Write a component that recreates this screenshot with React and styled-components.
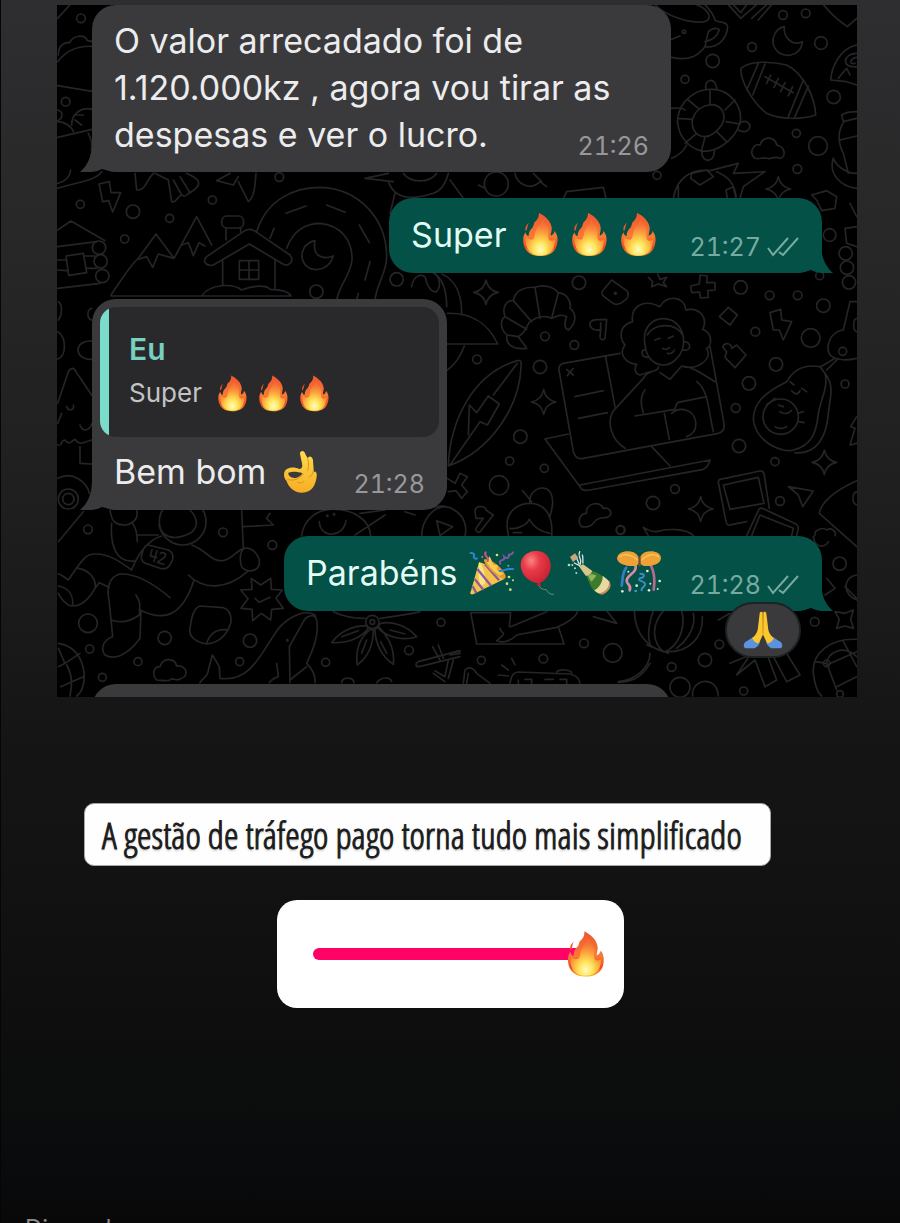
import React, { useState } from "react";
import styled, { createGlobalStyle, css } from "styled-components";

const GlobalStyle = createGlobalStyle`
	* {
		box-sizing: border-box;
	}
	body {
		margin: 0;
		background: #090909;
		font-family: Inter, "Liberation Sans", sans-serif;
	}
`;

const colors = {
	received: "#3a3a3c",
	sent: "#035147",
	quote: "#29292b",
	accent: "#7bdccc",
	pink: "#ff0464",
};

const Story = styled.main`
	display: flex;
	flex-direction: column;
	height: 100vh;
	overflow: hidden;
	padding-top: 5px;
	border-left: 1px solid #050505;
	background: linear-gradient(#2e2e30 0%, #272728 20%, #1e1e1f 42%, #151515 60%, #111111 75%, #090a0b 97%, #080808 100%);
`;

const Chat = styled.section`
	position: relative;
	display: flex;
	flex-direction: column;
	flex-shrink: 0;
	gap: 26px;
	margin: 0 43px 0 56px;
	padding: 0 35px;
	overflow: hidden;
	background: #000;
`;

const Wallpaper = styled.svg`
	position: absolute;
	top: 0;
	left: 0;
	width: 100%;
	height: 100%;
	fill: none;
	stroke: #252527;
	stroke-width: 5;
	stroke-linecap: round;
	stroke-linejoin: round;
`;

const Bubble = styled.article`
	position: relative;
	display: flex;
	flex-direction: column;
	max-width: 579px;
	border-radius: 24px;
	align-self: ${props => (props.$sent ? "flex-end" : "flex-start")};
	background: ${props => (props.$sent ? colors.sent : colors.received)};
	color: ${props => (props.$sent ? "#e2fbf5" : "#ececee")};
	padding: ${props => (props.$quoted ? "8px 8px 14px" : "12px 22px 14px")};
`;

const TailShape = styled.svg`
	position: absolute;
	bottom: 0;
	width: 34px;
	height: 30px;
	fill: ${props => (props.$sent ? colors.sent : colors.received)};
	${props =>
		props.$sent
			? css`
					right: -11px;
					transform: scaleX(-1);
			  `
			: css`
					left: -12px;
			  `}
`;

const Text = styled.p`
	position: relative;
	margin: 0;
	font-size: 34px;
	line-height: 47px;
`;

const Line = styled.div`
	position: relative;
	display: flex;
	align-items: center;
	min-height: 49px;
	padding: ${props => (props.$inset ? "0 14px" : "0")};
`;

const Emojis = styled.span`
	display: flex;
	gap: 4px;
	margin: 0 28px 0 12px;
`;

const Emoji = styled.svg`
	display: block;
	flex-shrink: 0;
	width: ${props => props.$size || 45}px;
	height: ${props => props.$size || 45}px;
`;

const Meta = styled.span`
	display: flex;
	align-items: center;
	gap: 6px;
	font-size: 25px;
	font-variant-numeric: tabular-nums;
	line-height: 30px;
	color: ${props => (props.$sent ? "#78aba0" : "#98989c")};
	${props =>
		props.$float
			? css`
					float: right;
					margin: 20px 0 -3px;
			  `
			: css`
					align-self: flex-end;
					margin: 0 0 -3px auto;
			  `}
`;

const Ticks = styled.svg`
	width: 33px;
	height: 22px;
	fill: none;
	stroke: currentColor;
	stroke-width: 2;
`;

const Quote = styled.blockquote`
	display: flex;
	flex-direction: column;
	min-width: 339px;
	height: 130px;
	margin: 0 0 10px;
	padding: 23px 20px 23px 29px;
	border-radius: 16px;
	background: linear-gradient(to right, ${colors.accent} 9px, ${colors.quote} 9px);
`;

const Author = styled.cite`
	font-size: 30px;
	font-weight: 600;
	font-style: normal;
	line-height: 38px;
	color: #78d0c0;
`;

const Quoted = styled.div`
	display: flex;
	align-items: center;
	font-size: 26px;
	line-height: 50px;
	color: #c3c3c6;
`;

const Reaction = styled.span`
	position: absolute;
	right: 21px;
	bottom: -47px;
	display: grid;
	place-items: center;
	width: 76px;
	height: 56px;
	border: 2px solid #1c2423;
	border-radius: 28px;
	background: ${colors.received};
`;

const NextBubble = styled.div`
	position: relative;
	width: 579px;
	max-width: 100%;
	height: 60px;
	margin: 47px 0 -47px;
	border-radius: 24px;
	background: ${colors.received};
`;

const Caption = styled.p`
	align-self: flex-start;
	flex-shrink: 0;
	margin: 106px 20px 0 83px;
	padding: 7px 28px 7px 17px;
	border: 1px solid #a5a5a5;
	border-radius: 10px;
	background: #fefefe;
	color: #1b1b1b;
	font-family: "Open Sans Condensed Light", "Open Sans Condensed", sans-serif;
	font-size: 37px;
	line-height: 47px;
	white-space: nowrap;
	-webkit-text-stroke: 1px #1b1b1b;
	text-shadow: 0 2px 2px rgba(0, 0, 0, 0.2);
`;

const SliderCard = styled.label`
	align-self: center;
	flex-shrink: 0;
	display: flex;
	align-items: center;
	width: 347px;
	height: 108px;
	margin-top: 34px;
	padding: 0 38px 0 36px;
	border-radius: 20px;
	background: #fff;
`;

const SliderBox = styled.span`
	position: relative;
	display: block;
	flex: 1;
	height: 12px;
`;

const Range = styled.input`
	appearance: none;
	display: block;
	width: 100%;
	height: 12px;
	margin: 0;
	border-radius: 6px;
	background: ${colors.pink};
	cursor: pointer;

	&::-webkit-slider-thumb {
		appearance: none;
		width: 36px;
		height: 46px;
		opacity: 0;
	}
`;

const Thumb = styled.span`
	position: absolute;
	top: 50%;
	transform: translate(-50%, -50%);
	pointer-events: none;
`;

const Discard = styled.button`
	align-self: flex-start;
	flex-shrink: 0;
	margin: 206px 0 0 24px;
	padding: 0;
	border: 0;
	background: none;
	color: #8a8a8d;
	font: 24px/30px Inter, "Liberation Sans", sans-serif;
`;

// [x, y, r] lists and strokes; every patch has its own origin and is drawn at a third of its size
const patches = [
	{
		at: [0, 0],
		dots: [
			[243, 55, 13], [197, 305, 13], [241, 613, 12], [399, 635, 20], [509, 655, 12], [637, 600, 12], [838, 531, 13],
			[374, 717, 12], [949, 875, 20], [1190, 838, 20], [297, 743, 20], [302, 784, 20], [307, 828, 20],
		],
		lines: [
			"M173 55L210 14M175 165C175 140 185 128 210 127C220 105 255 102 262 122C272 122 277 125 280 128M173 185C200 150 235 137 276 139M173 257L276 274",
			"M173 330C190 335 190 355 173 362M215 375C215 340 245 320 276 328M230 345H250M225 360L245 375M173 365C195 365 215 380 220 395M173 412L276 388M265 400C276 420 276 440 274 450",
			"M173 550C195 545 210 530 212 510M173 565C240 545 290 540 305 515M297 552L328 545L333 578L362 578L338 636L326 602L308 605Z",
			"M405 520L410 570C440 570 435 545 460 520M465 520L505 540L515 605C530 610 530 590 545 585C560 595 560 580 570 578C600 560 605 545 580 530L560 520M520 540L545 585M540 530L570 578",
			"M650 542L690 520M650 542L700 555L715 530M715 545L745 605C765 590 765 550 768 520",
			"M770 695C800 600 880 562 960 562C1080 565 1160 660 1160 770C1160 820 1130 850 1125 900M860 745C880 690 920 670 960 670C1020 675 1058 720 1056 780C1050 830 1020 850 1010 900",
			"M858 640L918 618M980 615L1035 637M1078 675L1108 728M1110 785L1095 840M1075 880L1070 900M822 685L810 715",
			"M945 722C915 728 900 755 908 780C920 820 985 820 1000 768C970 780 935 770 945 722Z",
			"M680 648H716C736 648 736 684 716 684H680C660 684 660 648 680 648ZM678 685V720M722 685V695",
			"M620 770L730 695C742 686 755 686 767 695L870 765C885 785 865 800 850 793L748 732L640 795C620 800 605 785 620 770ZM668 780V855M825 780V865M718 782H776V838H718ZM747 782V838M718 810H776",
			"M605 888C630 850 700 850 725 870C760 855 800 855 810 868C850 870 865 875 873 888H333",
			"M333 885C370 830 395 790 415 775L468 702L522 775L590 650L635 735M415 778L440 770L458 802L475 762L522 775M545 735L565 728L580 767L597 728L615 738",
			"M173 690L213 663L315 722M173 740L290 725M173 865L300 850M173 780H200M255 768H285M173 810L200 812M260 805H290M198 768L250 760L260 818L206 826Z",
			"M1165 520L1095 535L1180 545M1165 545C1185 600 1240 600 1300 580C1330 570 1340 540 1345 520M1210 520C1230 550 1290 550 1310 520M1185 580L1170 640",
			"M1235 860C1240 830 1260 820 1275 830C1280 850 1290 880 1310 875C1330 850 1310 820 1300 820",
		],
	},
	{
		at: [450, 0],
		dots: [
			[999, 45, 13], [1067, 40, 13], [1113, 129, 19], [906, 141, 13], [788, 183, 20], [705, 238, 12], [1151, 291, 20],
			[1039, 400, 12], [1104, 438, 28], [1042, 507, 13], [621, 526, 12], [139, 552, 36], [1139, 705, 19], [1187, 760, 20],
			[1191, 803, 20], [1197, 847, 20], [1109, 827, 12], [702, 95, 5],
		],
		stars: [[985, 567]],
		lines: [
			"M1003 80C975 85 960 120 975 145C995 180 1055 170 1057 125C1025 140 1000 110 1003 80Z",
			"M873 205C900 180 970 185 1010 195C1060 220 1095 290 1097 345C1060 358 990 360 950 340C905 305 870 240 873 205ZM925 190L890 270M945 192L908 285M1060 240L1015 350M1075 258L1035 350M945 230L1030 278M962 225L950 250M985 235L972 262M1005 248L992 275M1028 260L1015 287",
			"M683 355C690 300 740 265 790 268C840 270 880 320 870 370C850 430 790 460 750 452C710 440 680 400 683 355ZM727 360C735 330 760 315 790 314C820 320 830 350 815 375C790 410 765 415 745 405C730 395 725 380 727 360Z",
			"M780 314V270M825 330L855 300M828 365L870 372M800 395L830 425M765 412L755 450M740 400L705 430M727 358L683 355M745 325L715 300",
			"M768 268C760 235 800 230 800 268M866 372C885 355 905 370 898 385C890 400 870 395 862 388M755 455C755 490 795 490 793 452M665 325C690 322 700 325 705 330M665 475C690 465 705 445 710 435",
			"M615 14C650 50 720 70 760 66C790 60 780 30 740 14M665 172C720 185 745 165 765 140C800 145 830 120 833 80C830 60 800 70 795 60C790 40 775 25 765 14M765 140L775 95C790 80 805 85 808 90C800 110 790 120 765 125M665 118L690 108",
			"M835 14L872 55L920 14M850 14L872 38L890 14M905 55L950 14M925 60L965 14M1120 14C1150 50 1170 65 1192 80L1220 55",
			"M915 475C895 460 910 430 930 435C940 405 975 410 980 435C1005 440 1010 470 990 475C975 465 965 480 950 475C940 470 930 480 915 475Z",
			"M1220 135C1170 145 1145 200 1142 240L1190 245L1220 255M1220 160C1180 160 1170 205 1220 200M1220 172C1200 175 1195 195 1215 190M1165 235L1190 205L1200 225",
			"M1175 345C1190 335 1205 335 1220 335M1175 345L1180 365L1220 355M1180 368C1160 400 1165 430 1180 460L1195 520M1170 420L1220 408M1150 475C1160 500 1190 520 1220 520M1150 475C1135 520 1170 560 1220 565",
			"M670 595C680 530 730 505 780 512L865 490L850 520L945 515L880 560L870 595M725 520L770 510L790 530L750 555L722 535ZM685 560V595M828 570L850 560L858 595M828 570L832 595M800 515C840 530 855 560 858 590",
			"M1085 585L1130 572L1160 590L1155 625L1115 632L1100 600ZM1220 680L1185 685L1190 730L1220 740M1200 610L1220 650",
			"M195 520C200 550 240 575 270 545L290 560M250 520L275 545M85 555L105 565M340 595L350 575L460 562L468 595M0 540L40 595",
		],
	},
	{
		at: [430, 270],
		dots: [
			[447, 38, 20], [932, 52, 20], [1019, 76, 13], [1103, 76, 13], [1180, 107, 20], [345, 199, 13], [433, 225, 13],
			[141, 268, 13], [330, 291, 20], [976, 185, 13], [1142, 204, 28], [1038, 283, 20], [957, 340, 20], [917, 414, 13],
			[1245, 342, 12], [271, 500, 20], [239, 573, 12], [343, 595, 12], [207, 646, 29], [927, 528, 20], [1035, 575, 12],
			[735, 657, 13], [669, 699, 20], [1050, 693, 13], [571, 780, 12], [1238, 244, 12], [556, 70, 3], [1052, 440, 53],
		],
		stars: [[168, 67], [341, 396], [812, 717], [1183, 577]],
		lines: [
			"M290 235C240 240 225 215 232 195C210 180 210 150 225 140C215 110 230 90 250 92C255 60 285 50 315 52C340 42 370 50 385 68C410 70 425 95 420 115C440 130 440 160 415 180C400 175 405 150 410 140C390 130 380 140 365 145C345 135 320 140 300 155C290 165 290 185 265 200C275 215 285 225 290 235ZM315 52L330 145M385 68L365 145M250 92L305 155M225 140L290 178M232 195L265 200",
			"M545 30L590 62C597 70 595 80 588 88L572 100C560 105 555 104 545 97L520 78C512 70 515 65 520 60ZM810 15L832 18L830 38L855 38V60L833 62L835 82L812 84L808 66L785 68L782 48L808 42Z",
			"M683 12L690 28L710 22L700 38L710 50L685 42L665 50L668 35L655 22M895 112L922 135L900 165L868 140ZM1020 128L1052 118L1055 150L1085 155L1060 210L1048 180H1030Z",
			"M530 148L525 205C520 212 510 210 510 200L512 180C490 182 478 175 480 160C482 148 500 148 530 148M512 158V180M878 230C885 215 905 220 905 235L920 225L948 255L915 293L885 262L890 245Z",
			"M52 130C110 128 170 150 203 222H52M52 300C80 280 95 250 103 228M15 12C40 30 50 70 50 110M35 12C80 30 95 80 95 130",
			"M55 588C60 450 130 310 262 272C272 270 275 275 273 290C270 400 190 540 55 588ZM262 280L190 375M115 495L118 405L140 428L175 378L208 402L172 465L150 455L60 585",
			"M570 250L400 280C388 285 385 292 387 300L430 545C435 562 445 568 460 565L865 490C880 485 885 475 882 460L840 230M527 262L555 410M435 380L520 362M445 445L532 428M410 298L430 315M430 295L412 317",
			"M415 492L345 507L450 650C455 662 465 663 480 660L820 598C835 590 838 580 840 570L450 645M665 530L720 588",
			"M630 315C610 310 615 290 620 283C585 280 565 250 585 225C565 200 570 165 608 155C600 110 640 85 690 110C705 75 765 75 767 120C810 110 835 145 818 178C850 190 845 230 830 235C850 270 800 300 760 290M630 315L660 305",
			"M645 225C635 170 670 145 702 146C740 148 765 180 760 225C755 260 725 285 702 285C670 285 648 260 645 225ZM652 195C670 160 735 155 758 195M648 238C630 238 632 262 655 262M762 215C785 215 785 245 760 240M675 210L690 205M715 205L730 198M698 235C705 240 715 238 718 232M712 250C722 252 730 248 733 240",
			"M685 290C690 305 650 300 640 325L548 425C530 460 545 510 585 535M690 308L720 328L755 288C790 290 820 315 855 335M800 335C835 360 835 420 850 485M645 360C630 380 630 400 640 428M615 438L735 418C740 400 740 400 745 397L830 380M703 430L718 508M725 430C750 410 790 415 797 455C800 485 785 495 770 500",
			"M1170 290C1110 280 1085 310 1070 335C1000 370 970 400 970 450C980 520 1060 550 1090 540C1150 525 1160 480 1165 430C1175 380 1195 350 1185 310ZM1185 310C1215 350 1200 380 1195 430C1190 500 1160 555 1095 548",
			"M1080 335L1092 345M1085 362C1095 375 1105 375 1110 362M1115 355L1130 365M1045 405L1060 410M1050 425C1060 435 1080 430 1085 420M1035 470C1045 477 1060 477 1070 470M1010 405L1035 385M1105 430L1120 425M1105 455L1122 458M1172 290L1215 265M1190 300L1225 265",
			"M1260 95L1240 180C1200 185 1185 230 1200 255C1220 275 1260 270 1280 265M1260 95H1280M1280 145C1268 150 1268 180 1280 185M1280 440L1262 470L1275 475L1260 525L1280 520",
			"M870 628L990 603C998 602 1000 605 1002 610L1018 715M870 628C865 630 864 635 866 642L888 755C890 765 895 767 905 764L950 755M880 645L985 622L1002 700L900 718ZM950 797L985 722C988 715 992 712 1000 716L1098 762C1108 768 1106 775 1100 797M965 797L990 735L1090 775L1085 797",
			"M1075 650L1150 663L1118 710L1105 675ZM1280 632C1230 655 1175 690 1168 730L1280 830M1280 665C1265 670 1265 700 1280 705M1155 797C1150 780 1180 770 1190 780C1205 770 1220 785 1215 797M1150 800C1155 840 1190 830 1195 815",
			"M52 625L75 640L90 610L112 620L95 645L112 665L95 685L78 662L55 665M135 725C135 705 165 705 170 722L190 735L150 785C140 790 135 780 140 772L160 745H138Z",
			"M232 775C225 720 270 700 300 700C340 700 370 730 365 797M232 775L235 797M298 748C290 765 260 780 240 775M298 748C310 770 330 785 360 790M300 700C295 660 340 640 360 665C375 690 365 720 360 738M278 662L305 695M250 788H275",
			"M455 770C440 755 450 730 470 730C465 700 510 690 520 715C545 710 550 740 530 742C520 745 500 740 490 760C480 772 465 772 455 770ZM0 715C60 690 120 740 105 797M20 752L68 770L30 797ZM640 772C660 785 670 785 680 785C710 775 770 775 790 797M640 772L655 797",
		],
	},
	{
		at: [0, 280],
		dots: [[205, 657, 30], [205, 657, 17]],
		lines: [
			"M175 65C185 70 190 100 175 120M275 85C260 90 260 115 275 120M173 155C200 170 200 230 173 237M276 183C220 180 220 240 276 238",
			"M173 370L205 275C213 262 222 262 228 275L275 345M173 430L185 400M200 380C205 395 225 390 220 375M240 435C250 460 270 450 276 430M173 495C190 500 180 480 195 480C210 500 215 480 225 478C240 500 250 485 276 480M240 500V550L275 552M173 595C220 570 262 610 268 640",
		],
	},
	{
		at: [40, 500],
		dots: [
			[144, 88, 13], [549, 97, 13], [697, 135, 13], [144, 370, 28], [374, 414, 20], [630, 422, 20], [149, 447, 12],
			[294, 485, 12], [187, 532, 12], [599, 485, 12], [857, 487, 12], [1203, 367, 12], [1107, 451, 13], [428, 65, 70],
			[742, 421, 2], [997, 366, 20], [997, 366, 7], [862, 47, 2], [882, 43, 2],
		],
		lines: [
			"M357 75C365 110 400 125 450 100C480 80 470 50 450 30M210 30C215 70 230 75 260 75C290 65 295 50 290 32M215 70C210 130 225 190 285 183M278 70C290 90 290 100 292 125M290 105H355M55 125L130 35",
			"M55 222C60 220 70 230 85 240C120 190 135 160 165 162C205 160 240 185 275 210C290 170 320 120 365 108M115 205C150 210 170 240 165 265C140 310 110 325 85 315C70 305 60 290 55 280M55 258C90 265 100 290 98 315M165 265L178 248L207 262",
			"M390 293C340 250 290 220 240 222C205 230 200 270 207 300L218 410C190 420 180 445 195 465C220 480 260 470 300 415L303 330M288 285C305 310 298 325 298 345C270 365 240 370 213 360M300 330C380 370 430 340 462 240M445 225C490 270 560 270 622 215M455 135C500 150 510 185 550 182C580 175 590 150 612 145",
			"M612 145C640 140 660 170 658 190C655 215 620 220 605 200C598 180 600 155 612 145ZM605 30L610 145M610 80L700 75L680 55L690 40",
			"M325 135L385 150C400 158 402 170 395 185C385 207 375 208 360 205L315 190C302 182 302 172 308 155C312 140 318 135 325 135Z",
			"M634 235L662 255L692 235L694 268L727 270L708 295L730 325L695 328L692 360L664 340L638 362L636 328L603 325L624 296L602 270L636 268ZM645 295L658 307L690 292",
			"M480 318L550 323C570 330 575 350 572 370C560 410 530 430 500 432C460 425 445 405 450 385C455 350 460 325 480 318ZM500 430C510 400 530 385 565 390",
			"M350 540C335 525 340 500 360 500C370 470 405 475 410 498C440 495 450 530 420 537C405 545 400 530 390 540C375 545 365 540 350 540Z",
			"M480 548C490 530 505 530 505 510L517 465L538 500L540 535C640 550 670 440 720 380C760 340 800 330 825 345C840 380 830 430 800 490C830 520 825 545 825 548M750 548L748 440L790 365C800 345 825 340 830 360M710 490L715 530C700 535 690 545 688 548M750 540L800 500",
			"M980 378C940 375 900 395 875 428C920 430 965 415 985 385ZM992 388C960 410 945 450 952 495C985 470 1000 430 1000 390ZM1005 388C1005 430 1025 470 1060 493C1065 450 1045 410 1015 380ZM1018 372C1050 360 1100 375 1130 410C1090 425 1040 410 1015 385Z",
			"M880 335C910 350 950 355 975 355M1020 355C1060 350 1100 345 1140 335M905 410L955 392M965 460L980 420M1040 460L1022 425M1095 402L1050 390",
			"M1260 452L1135 485C1125 490 1125 500 1138 500L1260 470M1178 440L1200 480M1195 435L1210 475M1180 520L1215 545M1185 512L1215 530L1225 480M1240 480L1225 535",
			"M55 430C140 440 150 560 110 588M55 445L75 490L55 500M75 490L120 460M80 495C100 530 95 560 90 588M62 560L130 530",
			"M785 108C790 60 830 30 870 28C940 25 990 60 992 108M838 65C840 115 910 115 918 62M945 105L1035 45M960 40L1035 30M1145 108C1145 60 1180 20 1215 20M1095 35L1125 45M905 548C905 530 940 530 942 548M1010 548C1025 530 1050 530 1055 545",
		],
	},
	{
		at: [450, 520],
		dots: [
			[512, 30, 13], [1169, 131, 20], [1094, 305, 13], [402, 370, 13], [488, 399, 28], [94, 421, 12], [280, 416, 13],
			[808, 373, 13], [665, 441, 13], [765, 420, 20], [881, 513, 12], [690, 502, 30], [1130, 430, 10], [1170, 522, 10],
		],
		lines: [
			"M62 278L80 372H342L325 320M62 278H182L178 320M150 325C150 345 180 330 140 362C160 370 180 365 200 345L320 322C350 310 380 290 382 275M182 320L290 275M430 290L500 310L470 272",
			"M553 272C555 340 590 380 640 395C720 400 760 350 757 290M600 372C590 340 600 300 610 272M640 395C610 370 600 320 640 272M645 395C680 380 710 330 695 272M590 375L655 400M600 400C600 440 560 480 505 485M600 430C570 480 540 485 505 487M730 280C740 330 700 370 680 385M728 528C720 480 800 460 805 528",
			"M805 300L840 280M840 430L900 405L860 465L915 420L945 500L980 480L950 400M965 400L1010 485L1050 465L1010 400",
			"M1220 358C1140 355 1085 400 1090 460C1095 500 1105 520 1115 528M1220 410C1180 370 1130 400 1130 430L1160 510M1130 430L1095 425M1130 435L1220 395M1160 500L1220 470M1180 365C1200 400 1210 420 1220 440",
			"M1155 275L1185 280L1210 270L1202 298L1210 325L1185 318L1160 325L1168 298ZM1130 175L1155 205L1125 225M1220 165C1180 170 1175 220 1220 240M1185 200L1220 235",
			"M180 490C185 465 190 458 205 456L360 462C380 465 390 480 390 490M320 456C330 445 365 450 365 460M155 435L175 450M185 415L195 435M145 465L175 468M205 480V490M225 478H245V490M285 478H310M330 478H350V490",
			"M40 490L45 450C60 435 75 450 80 460L120 490M0 400C20 395 30 390 30 400L0 405M50 490L55 460",
		],
	},
];

const Doodles = () => (
	<Wallpaper viewBox="57 5 800 692" preserveAspectRatio="xMidYMid slice" aria-hidden="true">
		{patches.map(patch => (
			<g key={patch.at.join()} transform={`translate(${patch.at.join(" ")}) scale(0.33333)`}>
				{patch.dots.map(([x, y, r], i) => (
					<circle key={i} cx={x} cy={y} r={r} />
				))}
				{(patch.stars || []).map(([x, y]) => (
					<path
						key={x}
						d={`M${x} ${y - 37}q6 31 37 37q-31 6 -37 37q-6 -31 -37 -37q31 -6 37 -37Z`}
					/>
				))}
				<path d={patch.lines.join("")} />
			</g>
		))}
		<g transform="translate(40 500) scale(0.33333) rotate(16 350 170)">
			<path d="M331 154V173H350M346 154V186M358 158C362 150 376 153 374 162C372 172 360 178 357 186H377" />
		</g>
	</Wallpaper>
);

const Tail = props => (
	<TailShape $sent={props.sent} viewBox="0 0 34 30" aria-hidden="true">
		<path d="M12 0C12 15 7 24 0 30C8 31 16 30 22 27L34 30V0Z" />
	</TailShape>
);

const Fire = props => (
	<Emoji $size={props.size} viewBox="396 453 144 144" role="img" aria-label="🔥">
		<defs>
			<linearGradient id="fireOuter" x1="0" y1="0" x2="0" y2="1">
				<stop offset="0" stopColor="#f0552e" />
				<stop offset="0.55" stopColor="#f97a33" />
				<stop offset="0.8" stopColor="#f4481e" />
				<stop offset="1" stopColor="#fbb52c" />
			</linearGradient>
			<radialGradient id="fireInner" cx="0.5" cy="0.84" r="0.72">
				<stop offset="0" stopColor="#fffbc4" />
				<stop offset="0.3" stopColor="#ffe65a" />
				<stop offset="0.6" stopColor="#fcae3f" />
				<stop offset="1" stopColor="#f98742" stopOpacity="0.3" />
			</radialGradient>
		</defs>
		<path
			fill="url(#fireOuter)"
			d="M463 455C480 464 502 480 504 505C504 514 500 523 501 529C509 526 512 520 513 514C521 524 524 536 522 550C519 580 498 594 467 594C436 594 416 578 413 550C412 536 414 526 420 518C422 526 425 530 430 530C430 518 434 510 442 503C447 497 446 491 449 486C458 478 464 470 463 455Z"
		/>
		<path fill="#f0542c" d="M431 487C422 494 417 504 421 514C428 508 424 498 431 487Z" />
		<path
			fill="url(#fireInner)"
			d="M474 478C470 494 457 500 452 514C450 524 450 532 445 539C437 544 430 540 422 534C416 560 430 592 467 592C502 592 516 566 514 540C508 546 500 548 495 540C490 528 496 520 494 508C490 494 478 490 474 478Z"
		/>
	</Emoji>
);

const OkHand = () => (
	<Emoji viewBox="838 500 138 138" role="img" aria-label="👌">
		<defs>
			<linearGradient id="skin" x1="0" y1="0" x2="0" y2="1">
				<stop offset="0" stopColor="#ffdb4b" />
				<stop offset="1" stopColor="#f6ad24" />
			</linearGradient>
		</defs>
		<path
			fill="url(#skin)"
			fillRule="evenodd"
			d="M905 513C909 502 919 505 922 516L930 530C930 520 942 520 945 532L948 572C950 565 958 570 957 582C954 610 942 634 912 634C886 633 870 616 864 597C854 588 854 569 864 562C876 554 892 556 903 561C910 562 914 556 912 546ZM870 573C868 583 880 591 895 588C902 586 910 580 913 574C900 571 884 567 870 573Z"
		/>
		<path
			fill="none"
			stroke="#d98e1b"
			strokeWidth="3"
			strokeLinecap="round"
			d="M930 532C933 544 932 558 929 566M947 566C945 576 941 582 934 586M868 594C885 598 900 594 915 578M897 601C905 607 913 605 918 598"
		/>
	</Emoji>
);

const Popper = () => (
	<Emoji viewBox="12 21 135 135" role="img" aria-label="🎉">
		<path fill="#f6c445" d="M42 58C60 60 100 84 118 108L26 153C17 157 13 150 18 143Z" />
		<path fill="#fbe38b" d="M48 62C58 82 62 104 60 122L46 130C40 110 40 84 42 58Z" />
		<path fill="none" stroke="#8a5ba6" strokeWidth="7" d="M37 78L78 128M29 108L55 140M23 130L34 150M60 64L102 112" />
		<path fill="#e79a2e" d="M56 50C72 42 112 72 122 98C124 110 112 110 100 100C82 90 60 66 56 50Z" />
		<path fill="#f6c94f" d="M64 54L74 40L86 66L98 66L96 80L116 92L104 98C88 88 72 72 64 54Z" />
		<g fill="none" strokeWidth="6" strokeLinecap="round">
			<path stroke="#2f86cf" d="M17 30C26 28 30 36 26 42C28 48 34 48 36 46M104 84C118 84 120 76 144 78" />
			<path stroke="#c05a86" d="M62 28C54 40 74 40 68 54" />
			<path stroke="#7a5a9a" d="M106 62C98 48 122 56 118 42C126 50 136 40 130 34C136 36 142 34 144 28" />
		</g>
		<g fill="#d8e07a">
			<circle cx="96" cy="36" r="4" />
			<circle cx="132" cy="102" r="4" />
			<circle cx="144" cy="112" r="3" />
			<circle cx="126" cy="122" r="4" />
			<circle cx="136" cy="140" r="4" />
			<circle cx="52" cy="42" r="3" fill="#e27a3e" />
			<circle cx="130" cy="68" r="3" fill="#5fb7cf" />
		</g>
	</Emoji>
);

const Balloon = () => (
	<Emoji viewBox="159 21 135 135" role="img" aria-label="🎈">
		<defs>
			<radialGradient id="balloon" cx="0.35" cy="0.28" r="0.8">
				<stop offset="0" stopColor="#fa8482" />
				<stop offset="0.35" stopColor="#e93a48" />
				<stop offset="1" stopColor="#c01c2c" />
			</radialGradient>
		</defs>
		<path fill="none" stroke="#6f8d88" strokeWidth="3" d="M222 124C224 146 246 134 248 146C252 154 260 153 267 154" />
		<path
			fill="url(#balloon)"
			d="M211 24C242 22 260 46 257 74C254 100 236 116 224 120L229 128L216 129L218 121C188 116 168 94 167 66C167 42 186 25 211 24Z"
		/>
	</Emoji>
);

const Bottle = () => (
	<Emoji viewBox="306 21 135 135" role="img" aria-label="🍾">
		<path fill="#3c7a2c" d="M360 88C374 80 390 84 402 92C420 104 434 114 434 130C430 142 418 152 402 153C380 144 374 124 360 88Z" />
		<path fill="#e8d9a2" d="M413 98C426 108 437 116 436 130C432 144 420 152 406 152C396 150 392 146 388 142C402 134 414 118 413 98Z" />
		<path fill="#c48d5c" d="M432 110C440 122 438 144 412 155L400 152C424 146 436 130 432 110Z" />
		<path fill="#d9c48b" d="M342 70L354 64L382 84C376 96 368 100 362 98Z" />
		<path fill="#8fb35e" d="M370 96C378 92 388 94 394 98L380 116C374 110 370 104 370 96Z" />
		<path fill="#c9a77a" d="M315 42L330 31L340 44L324 57Z" />
		<path fill="none" stroke="#d5e9e2" strokeWidth="4" strokeLinecap="round" d="M344 26C336 42 352 44 346 64M352 36C356 46 352 54 354 60M328 60L344 68M336 48L342 62" />
		<g fill="#b8d8cf">
			<circle cx="312" cy="66" r="4" />
			<circle cx="330" cy="76" r="3" />
			<circle cx="334" cy="90" r="3" />
			<circle cx="322" cy="66" r="3" />
		</g>
	</Emoji>
);

const ConfettiBall = () => (
	<Emoji viewBox="453 21 135 135" role="img" aria-label="🎊">
		<g fill="none" strokeWidth="8" strokeLinecap="round">
			<path stroke="#347fc0" d="M484 74C470 90 474 112 470 128" />
			<path stroke="#d68bab" d="M512 66C514 92 496 88 486 108C480 126 502 122 494 142" />
			<path stroke="#b36b90" d="M558 68C568 88 570 116 566 140" />
			<path stroke="#3c8dc4" strokeWidth="6" d="M526 92C544 92 536 106 524 106C514 116 544 112 540 126C530 140 528 136 530 142" />
		</g>
		<path fill="#eea235" d="M456 46C458 28 484 20 506 28C518 34 524 44 524 56C518 72 502 70 486 68C468 64 458 58 456 46Z" />
		<path fill="#eea235" d="M588 46C588 28 562 20 540 28C528 34 523 44 523 56C530 72 544 70 560 68C578 64 586 58 588 46Z" />
		<path fill="none" stroke="#f9c766" strokeWidth="4" d="M464 42C476 30 500 34 518 52M582 42C570 30 546 34 530 52" />
		<path fill="#76502a" d="M520 42H527V70H520Z" />
		<g fill="#d9ebd0">
			<circle cx="472" cy="145" r="4" />
			<circle cx="515" cy="128" r="4" />
			<circle cx="547" cy="84" r="4" />
			<circle cx="552" cy="142" r="4" />
			<circle cx="584" cy="114" r="4" />
			<circle cx="578" cy="138" r="3" />
			<circle cx="490" cy="86" r="3" />
			<circle cx="556" cy="122" r="3" />
			<circle cx="512" cy="144" r="4" fill="#3f97cf" />
		</g>
	</Emoji>
);

const Pray = () => (
	<Emoji $size={40} viewBox="876 272 122 122" role="img" aria-label="🙏">
		{["", "translate(1874 0) scale(-1 1)"].map(flip => (
			<g key={flip} transform={flip}>
				<path fill="#5b93df" d="M905 356L882 370C876 378 877 389 888 389H912C920 384 925 378 927 371Z" />
				<path
					fill="#fbc72f"
					d="M927 281C929 276 936 276 936 282L937 347L925 373C916 376 905 364 904 357C914 349 921 340 922 322Z"
				/>
			</g>
		))}
		<path stroke="#d99a1e" strokeWidth="3" d="M937 280V346" />
	</Emoji>
);

const Stamp = props => (
	<Meta $sent={props.sent} $float={props.float}>
		<time>{props.time}</time>
		{props.sent && (
			<Ticks viewBox="0 0 33 22" role="img" aria-label="Entregue">
				<path d="M1 12L6 19L21 2M12 16L16 19L31 2" />
			</Ticks>
		)}
	</Meta>
);

export default function App() {
	const [value, setValue] = useState(100);

	return (
		<>
			<GlobalStyle />
			<Story>
				<Chat>
					<Doodles />

					<Bubble>
						<Tail />
						<Text>
							O valor arrecadado foi de 1.120.000kz , agora vou tirar as despesas e ver o lucro.
							<Stamp time="21:26" float />
						</Text>
					</Bubble>

					<Bubble $sent>
						<Tail sent />
						<Line>
							<Text>Super</Text>
							<Emojis>
								<Fire />
								<Fire />
								<Fire />
							</Emojis>
							<Stamp time="21:27" sent />
						</Line>
					</Bubble>

					<Bubble $quoted>
						<Tail />
						<Quote>
							<Author>Eu</Author>
							<Quoted>
								Super
								<Emojis>
									<Fire size={37} />
									<Fire size={37} />
									<Fire size={37} />
								</Emojis>
							</Quoted>
						</Quote>
						<Line $inset>
							<Text>Bem bom</Text>
							<Emojis>
								<OkHand />
							</Emojis>
							<Stamp time="21:28" />
						</Line>
					</Bubble>

					<Bubble $sent>
						<Tail sent />
						<Line>
							<Text>Parabéns</Text>
							<Emojis>
								<Popper />
								<Balloon />
								<Bottle />
								<ConfettiBall />
							</Emojis>
							<Stamp time="21:28" sent />
						</Line>
						<Reaction>
							<Pray />
						</Reaction>
					</Bubble>

					<NextBubble />
				</Chat>

				<Caption>A gestão de tráfego pago torna tudo mais simplificado</Caption>

				<SliderCard>
					<SliderBox>
						<Range
							type="range"
							min="0"
							max="100"
							value={value}
							aria-label="🔥"
							onChange={e => setValue(Number(e.target.value))}
						/>
						<Thumb style={{ left: `${value}%` }}>
							<Fire size={47} />
						</Thumb>
					</SliderBox>
				</SliderCard>

				<Discard type="button">Discard</Discard>
			</Story>
		</>
	);
}
